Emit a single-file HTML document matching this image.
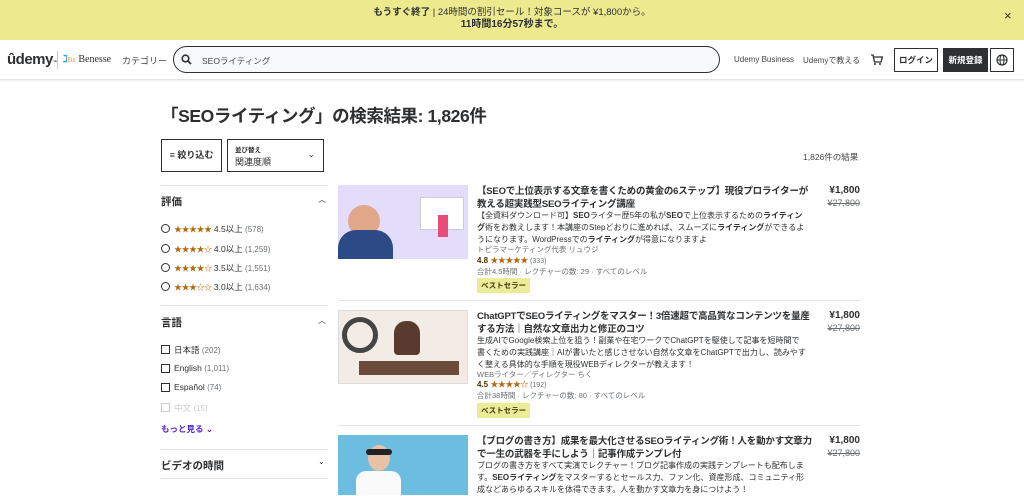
<!DOCTYPE html>
<html><head><meta charset="utf-8"><style>
*{margin:0;padding:0;box-sizing:border-box}
body{width:1024px;height:489px;overflow:hidden;background:#fff;font-family:"Liberation Sans","Noto Sans CJK JP",sans-serif;color:#2d2f31;position:relative}
.a{position:absolute}
.banner{left:0;top:0;width:1024px;height:40px;background:#ece98f;text-align:center;font-size:9.5px;line-height:12px;padding-top:7px}
.hdr{left:0;top:40px;width:1024px;height:40px;border-bottom:1px solid #e4e4e4;box-shadow:0 1px 2px rgba(0,0,0,.08)}
.t9{font-size:8.5px}
.line{height:1px;background:#e4e4e4}
.star{color:#b4690e;font-size:8px;letter-spacing:-0.5px}
.radio{width:9px;height:9px;border:1.3px solid #2d2f31;border-radius:50%}
.cb{width:9px;height:9px;border:1.3px solid #2d2f31}
.title{font-size:9.5px;font-weight:bold;line-height:13px;width:335px;letter-spacing:-0.2px}
.desc{font-size:8px;line-height:12px;color:#2d2f31;width:330px}
.gray{font-size:7.5px;color:#6a6f73}
.badge{background:#eceb98;font-size:7.5px;font-weight:bold;padding:2px 4px;color:#3d3c0a}
.price{font-size:10px;font-weight:bold;text-align:right;width:60px}
.old{font-size:9px;color:#6a6f73;text-decoration:line-through;text-align:right;width:60px}
</style></head><body>
<div class="a banner"><b>もうすぐ終了</b> | 24時間の割引セール！対象コースが ¥1,800から。<br><b style="font-size:10px">11時間16分57秒まで。</b></div>
<div class="a" style="left:1004px;top:8px;font-size:13px">×</div>
<div class="a hdr"></div>
<div class="a" style="left:7px;top:51px;font-size:15px;font-weight:bold;letter-spacing:-0.5px">ûdemy<span style="font-size:5px">™</span></div>
<div class="a" style="left:57px;top:51px;width:1px;height:18px;background:#ccc"></div>
<div class="a" style="left:63px;top:54px;font-size:10px;font-family:'Liberation Serif',serif"><span style="color:#2aa7df;font-weight:bold">ℷ</span><span style="color:#e89a2b;font-size:7px">Bx</span> Benesse</div>
<div class="a" style="left:122px;top:54px;font-size:9px;color:#444">カテゴリー</div>
<div class="a" style="left:173px;top:46px;width:547px;height:27px;border:1px solid #2d2f31;border-radius:14px;background:#f7f9fa"></div>
<svg class="a" style="left:181px;top:54px" width="11" height="11" viewBox="0 0 11 11"><circle cx="4.5" cy="4.5" r="3.3" fill="none" stroke="#2d2f31" stroke-width="1.6"/><line x1="7" y1="7" x2="10" y2="10" stroke="#2d2f31" stroke-width="1.8"/></svg>
<div class="a" style="left:202px;top:55px;font-size:8.5px;color:#444">SEOライティング</div>
<div class="a" style="left:734px;top:55px;font-size:8px;color:#444">Udemy Business</div>
<div class="a" style="left:803px;top:55px;font-size:8px;color:#444">Udemyで教える</div>
<svg class="a" style="left:870px;top:53px" width="13" height="13" viewBox="0 0 13 13"><path d="M1 2h2l1.5 7h6.5l1.5-5H4" fill="none" stroke="#2d2f31" stroke-width="1.3"/><circle cx="5" cy="11" r="1" fill="#2d2f31"/><circle cx="10" cy="11" r="1" fill="#2d2f31"/></svg>
<div class="a" style="left:894px;top:48px;width:44px;height:24px;border:1px solid #2d2f31;font-size:8.5px;font-weight:bold;text-align:center;line-height:22px">ログイン</div>
<div class="a" style="left:943px;top:48px;width:45px;height:24px;background:#2d2f31;color:#fff;font-size:8.5px;font-weight:bold;text-align:center;line-height:24px">新規登録</div>
<div class="a" style="left:990px;top:48px;width:24px;height:24px;border:1px solid #2d2f31"></div>
<svg class="a" style="left:996px;top:54px" width="12" height="12" viewBox="0 0 12 12"><circle cx="6" cy="6" r="5" fill="none" stroke="#2d2f31" stroke-width="1.2"/><ellipse cx="6" cy="6" rx="2" ry="5" fill="none" stroke="#2d2f31"/><line x1="1" y1="6" x2="11" y2="6" stroke="#2d2f31"/></svg>

<div class="a" style="left:161px;top:103px;font-size:17.5px;font-weight:bold;letter-spacing:-0.4px">「SEOライティング」の検索結果: 1,826件</div>
<div class="a" style="left:161px;top:139px;width:61px;height:33px;border:1px solid #2d2f31;font-size:9px;font-weight:bold;line-height:31px;text-align:center">≡ 絞り込む</div>
<div class="a" style="left:227px;top:139px;width:97px;height:33px;border:1px solid #2d2f31"></div>
<div class="a" style="left:235px;top:144px;font-size:6.5px;font-weight:bold">並び替え</div>
<div class="a" style="left:235px;top:155px;font-size:9px">関連度順</div>
<div class="a" style="left:308px;top:150px;font-size:8px">⌄</div>
<div class="a" style="left:803px;top:151px;font-size:8.5px;color:#444">1,826件の結果</div>

<div class="a line" style="left:161px;top:185px;width:167px"></div>
<div class="a" style="left:161px;top:194px;font-size:10.5px;font-weight:bold">評価</div><div class="a" style="left:318px;top:194px;font-size:8px">︿</div>
<div class="a radio" style="left:161px;top:224px"></div><div class="a t9" style="left:174px;top:223px"><span class="star">★★★★★</span> 4.5以上 <span style="color:#6a6f73;font-size:8px">(578)</span></div>
<div class="a radio" style="left:161px;top:244px"></div><div class="a t9" style="left:174px;top:243px"><span class="star">★★★★☆</span> 4.0以上 <span style="color:#6a6f73;font-size:8px">(1,259)</span></div>
<div class="a radio" style="left:161px;top:263px"></div><div class="a t9" style="left:174px;top:262px"><span class="star">★★★★☆</span> 3.5以上 <span style="color:#6a6f73;font-size:8px">(1,551)</span></div>
<div class="a radio" style="left:161px;top:282px"></div><div class="a t9" style="left:174px;top:281px"><span class="star">★★★☆☆</span> 3.0以上 <span style="color:#6a6f73;font-size:8px">(1,634)</span></div>
<div class="a line" style="left:161px;top:305px;width:167px"></div>
<div class="a" style="left:161px;top:315px;font-size:10.5px;font-weight:bold">言語</div><div class="a" style="left:318px;top:315px;font-size:8px">︿</div>
<div class="a cb" style="left:161px;top:345px"></div><div class="a t9" style="left:174px;top:344px">日本語 <span style="color:#6a6f73;font-size:8px">(202)</span></div>
<div class="a cb" style="left:161px;top:364px"></div><div class="a t9" style="left:174px;top:363px">English <span style="color:#6a6f73;font-size:8px">(1,011)</span></div>
<div class="a cb" style="left:161px;top:383px"></div><div class="a t9" style="left:174px;top:382px">Español <span style="color:#6a6f73;font-size:8px">(74)</span></div>
<div class="a cb" style="left:161px;top:403px;opacity:.25"></div><div class="a t9" style="left:174px;top:402px;opacity:.25">中文 <span style="font-size:8px">(15)</span></div>
<div class="a" style="left:161px;top:423px;font-size:8.5px;font-weight:bold;color:#5624d0">もっと見る ⌄</div>
<div class="a line" style="left:161px;top:449px;width:167px"></div>
<div class="a" style="left:161px;top:458px;font-size:10.5px;font-weight:bold">ビデオの時間</div><div class="a" style="left:318px;top:457px;font-size:8px">⌄</div>
<div class="a line" style="left:161px;top:478px;width:167px"></div>

<!-- card1 -->
<div class="a" style="left:338px;top:185px;width:130px;height:74px;background:#e4dcfb;overflow:hidden">
 <div class="a" style="left:82px;top:12px;width:44px;height:33px;background:#fff;border:1px solid #ccc"></div>
 <div class="a" style="left:10px;top:20px;width:32px;height:32px;border-radius:50%;background:#e1a78a"></div>
 <div class="a" style="left:0;top:45px;width:55px;height:35px;border-radius:18px 18px 0 0;background:#2b4a86"></div>
 <div class="a" style="left:100px;top:30px;width:10px;height:22px;background:#e84d7a"></div>
</div>
<div class="a title" style="left:477px;top:185px">【SEOで上位表示する文章を書くための黄金の6ステップ】現役プロライターが教える超実践型SEOライティング講座</div>
<div class="a desc" style="left:477px;top:210px">【全資料ダウンロード可】<b>SEO</b>ライター歴5年の私が<b>SEO</b>で上位表示するための<b>ライティング</b>術をお教えします！本講座のStepどおりに進めれば、スムーズに<b>ライティング</b>ができるようになります。WordPressでの<b>ライティング</b>が得意になりますよ</div>
<div class="a gray" style="left:477px;top:244px">トピラマーケティング代表 リュウジ</div>
<div class="a" style="left:477px;top:255px;font-size:8px;font-weight:bold;color:#4d3105">4.8 <span class="star">★★★★★</span> <span style="color:#6a6f73;font-weight:normal;font-size:7px">(333)</span></div>
<div class="a gray" style="left:477px;top:266px">合計4.5時間 · レクチャーの数: 29 · すべてのレベル</div>
<div class="a badge" style="left:477px;top:278px">ベストセラー</div>
<div class="a price" style="left:800px;top:185px">¥1,800</div>
<div class="a old" style="left:800px;top:198px">¥27,800</div>
<div class="a line" style="left:338px;top:300px;width:522px"></div>

<!-- card2 -->
<div class="a" style="left:338px;top:310px;width:130px;height:74px;background:#f3ece6;border:1px solid #ddd;overflow:hidden">
 <div class="a" style="left:3px;top:6px;width:36px;height:36px;border:5px solid #444;border-radius:50%"></div>
 <div class="a" style="left:55px;top:10px;width:26px;height:34px;background:#5a3a2e;border-radius:12px 12px 4px 4px"></div>
 <div class="a" style="left:20px;top:50px;width:100px;height:14px;background:#6b4b3b"></div>
</div>
<div class="a title" style="left:477px;top:310px">ChatGPTでSEOライティングをマスター！3倍速超で高品質なコンテンツを量産する方法｜自然な文章出力と修正のコツ</div>
<div class="a desc" style="left:477px;top:335px">生成AIでGoogle検索上位を狙う！副業や在宅ワークでChatGPTを駆使して記事を短時間で書くための実践講座｜AIが書いたと感じさせない自然な文章をChatGPTで出力し、読みやすく整える具体的な手順を現役WEBディレクターが教えます！</div>
<div class="a gray" style="left:477px;top:369px">WEBライター／ディレクター ちく</div>
<div class="a" style="left:477px;top:379px;font-size:8px;font-weight:bold;color:#4d3105">4.5 <span class="star">★★★★☆</span> <span style="color:#6a6f73;font-weight:normal;font-size:7px">(192)</span></div>
<div class="a gray" style="left:477px;top:390px">合計38時間 · レクチャーの数: 80 · すべてのレベル</div>
<div class="a badge" style="left:477px;top:403px">ベストセラー</div>
<div class="a price" style="left:800px;top:310px">¥1,800</div>
<div class="a old" style="left:800px;top:323px">¥27,800</div>
<div class="a line" style="left:338px;top:425px;width:522px"></div>

<!-- card3 -->
<div class="a" style="left:338px;top:435px;width:130px;height:60px;background:#6cbde0;overflow:hidden">
 <div class="a" style="left:30px;top:10px;width:22px;height:26px;background:#e8c2a5;border-radius:50%"></div>
 <div class="a" style="left:28px;top:14px;width:26px;height:6px;background:#222;border-radius:3px"></div>
 <div class="a" style="left:18px;top:36px;width:45px;height:30px;background:#fafafa;border-radius:10px 10px 0 0"></div>
</div>
<div class="a title" style="left:477px;top:435px">【ブログの書き方】成果を最大化させるSEOライティング術！人を動かす文章力で一生の武器を手にしよう｜記事作成テンプレ付</div>
<div class="a desc" style="left:477px;top:460px">ブログの書き方をすべて実演でレクチャー！ブログ記事作成の実践テンプレートも配布します。<b>SEOライティング</b>をマスターするとセールス力、ファン化、資産形成、コミュニティ形成などあらゆるスキルを体得できます。人を動かす文章力を身につけよう！</div>
<div class="a price" style="left:800px;top:435px">¥1,800</div>
<div class="a old" style="left:800px;top:448px">¥27,800</div>
</body></html>
